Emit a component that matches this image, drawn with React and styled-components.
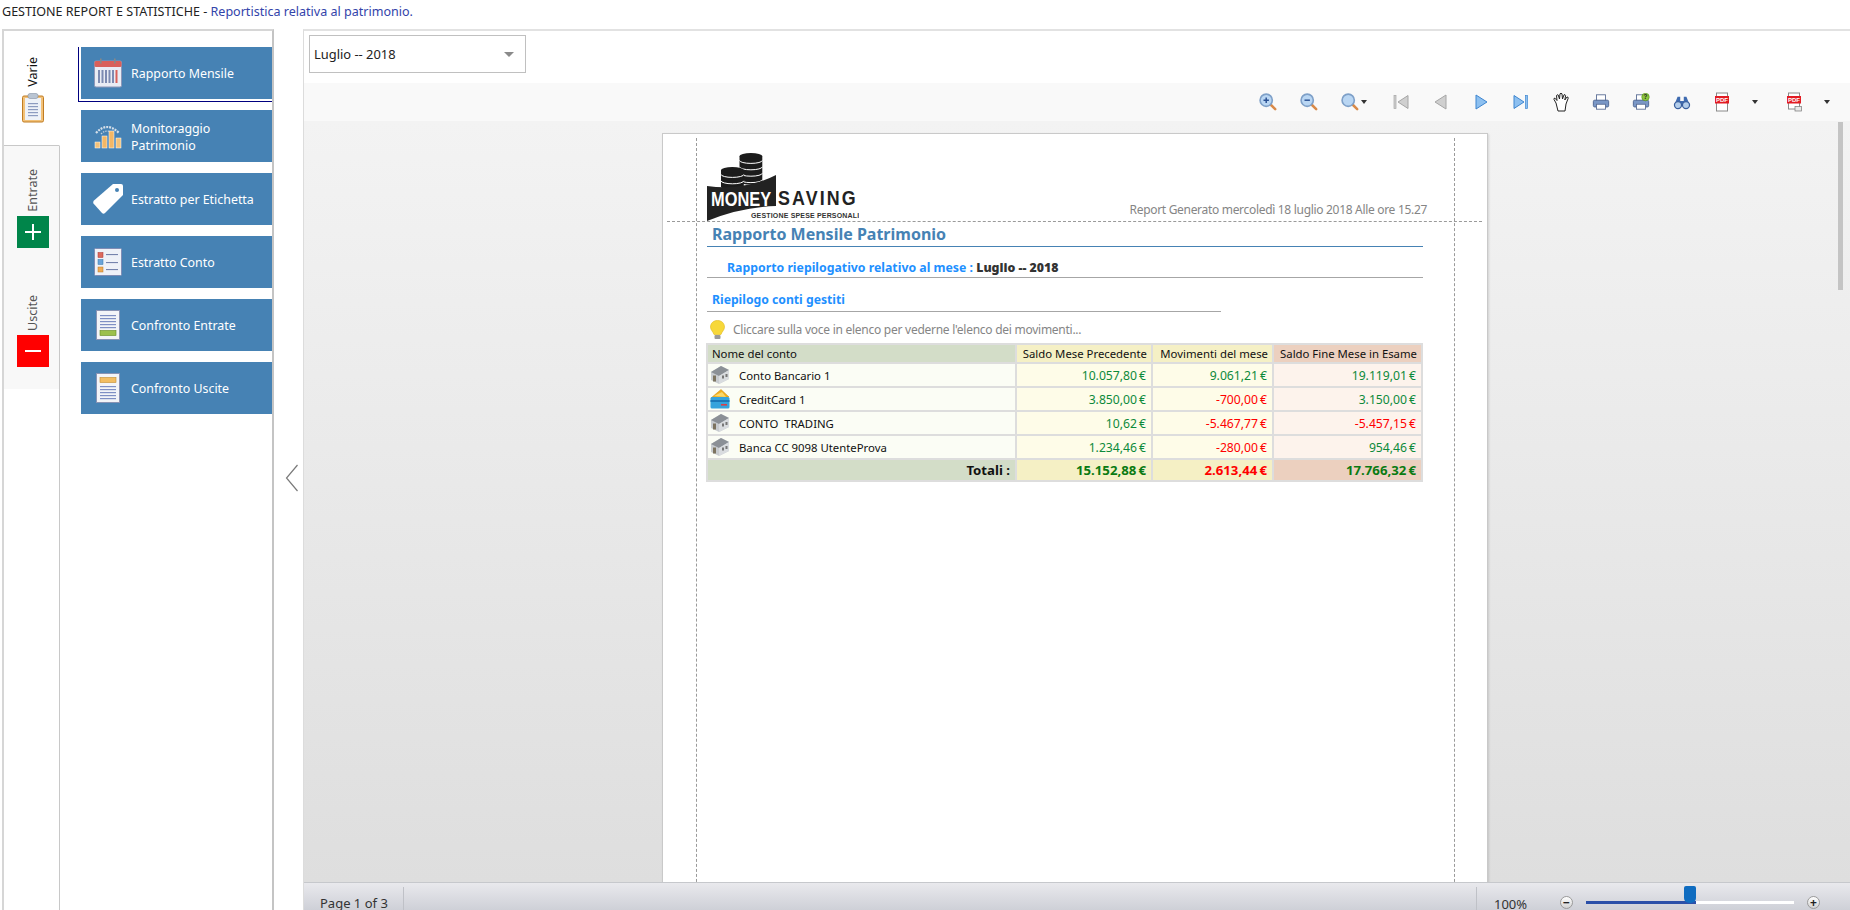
import React from 'react'
import styled, { createGlobalStyle } from 'styled-components'

const Global = createGlobalStyle`
    html, body {
        margin : 0;
        padding : 0;
        width : 1850px;
        height : 910px;
        overflow : hidden;
        background : #fff;
        font-family : "Noto Sans", "Liberation Sans", sans-serif;
        color : #222;
    }
    * { box-sizing : border-box; }
`

const Shell = styled.div`
    width : 1850px;
    height : 910px;
    display : flex;
    flex-direction : column;
    overflow : hidden;
`
const TopLine = styled.div`
    height : 29px;
    flex : none;
    padding : 3px 0 0 2px;
    font-size : 12.55px;
    line-height : 17px;
    color : #222;
    span { color : #3344aa; }
`
const Main = styled.div`
    flex : 1;
    min-height : 0;
    display : flex;
`
const LeftPanel = styled.div`
    width : 272px;
    margin-left : 2px;
    flex : none;
    display : flex;
    border : 2px solid #d6d6d6;
    border-bottom : 0;
    border-right-color : #c4c4c4;
`
const Tabs = styled.div`
    width : 56px;
    flex : none;
    display : flex;
    flex-direction : column;
`
const Tab = styled.div`
    height : ${p => p.$h}px;
    flex : none;
    display : flex;
    flex-direction : column;
    align-items : center;
    justify-content : flex-end;
    padding-bottom : ${p => p.$pb}px;
    padding-left : 3px;
    background : ${p => p.$active ? '#fff' : '#f8f8f8'};
    border-right : ${p => p.$active ? '1px solid transparent' : '1px solid #c8c8c8'};
    border-bottom : ${p => p.$active ? '1px solid #c8c8c8' : '0'};
    color : ${p => p.$active ? '#111' : '#555'};
`
const TabLabel = styled.div`
    writing-mode : vertical-rl;
    transform : rotate(180deg);
    font-size : 12.5px;
    line-height : 16px;
    margin-bottom : ${p => p.$mb}px;
`
const TabTail = styled.div`
    flex : 1;
    border-right : 1px solid #c8c8c8;
`
const ActionBox = styled.div`
    width : 32px;
    height : 32px;
    background : ${p => p.$bg};
    display : flex;
    align-items : center;
    justify-content : center;
`
const Menu = styled.div`
    flex : 1;
    padding : 16px 0 0 21px;
    display : flex;
    flex-direction : column;
    gap : 11px;
`
const MenuButton = styled.div`
    position : relative;
    height : 52px;
    flex : none;
    background : #4682b4;
    color : #fff;
    display : flex;
    align-items : center;
    font-size : 12.4px;
    line-height : 17px;
    ${p => p.$selected && `
        &::after {
            content : '';
            position : absolute;
            left : -3px;
            top : 0;
            right : 0;
            bottom : -3px;
            border-left : 1px solid #00007f;
            border-bottom : 1px solid #00007f;
        }
    `}
`
const MenuIcon = styled.div`
    width : 50px;
    flex : none;
    display : flex;
    justify-content : center;
    padding-left : 4px;
`
const MenuLabel = styled.div`
    padding-top : 1px;
`
const Splitter = styled.div`
    width : 29px;
    flex : none;
    display : flex;
    align-items : center;
    justify-content : center;
    padding : 16px 0 0 6px;
`
const Viewer = styled.div`
    flex : 1;
    min-width : 0;
    display : flex;
    flex-direction : column;
    border-left : 1px solid #dcdcdc;
    border-top : 2px solid #e2e2e2;
`
const ComboBar = styled.div`
    height : 52px;
    flex : none;
    padding : 4px 0 0 5px;
`
const Combo = styled.div`
    width : 217px;
    height : 38px;
    border : 1px solid #c0c0c0;
    display : flex;
    align-items : center;
    justify-content : space-between;
    padding : 0 11px 0 4px;
    font-size : 12.9px;
    color : #222;
`
const ComboCaret = styled.div`
    width : 0;
    height : 0;
    border-left : 5px solid transparent;
    border-right : 5px solid transparent;
    border-top : 5px solid #8a8a8a;
`
const Toolbar = styled.div`
    height : 38px;
    flex : none;
    background : #f9f9f9;
    display : flex;
    justify-content : flex-end;
    align-items : center;
`
const ToolButton = styled.div`
    width : ${p => p.$w}px;
    height : 24px;
    flex : none;
    display : flex;
    align-items : center;
    justify-content : ${p => p.$pad !== undefined ? 'flex-start' : 'center'};
    padding-left : ${p => p.$pad || 0}px;
`
const ToolCaret = styled.div`
    width : 0;
    height : 0;
    margin-left : ${p => p.$gap}px;
    border-left : 3.5px solid transparent;
    border-right : 3.5px solid transparent;
    border-top : 4px solid #333;
`
const ReportArea = styled.div`
    position : relative;
    flex : 1;
    min-height : 0;
    background : linear-gradient(#f3f3f3, #dedede);
    padding-top : 12px;
    display : flex;
    justify-content : center;
    overflow : hidden;
`
const ScrollThumb = styled.div`
    position : absolute;
    right : 7px;
    top : 1px;
    width : 5px;
    height : 168px;
    background : #c4c4c4;
`
const Page = styled.div`
    position : relative;
    width : 826px;
    height : 800px;
    flex : none;
    margin-right : 4px;
    background : #fff;
    border : 1px solid #c9c9c9;
    box-shadow : 1px 1px 2px rgba(0, 0, 0, .12);
    padding : 18px 64px 0 44px;
`
const GuideV = styled.div`
    position : absolute;
    top : 4px;
    bottom : 0;
    left : ${p => p.$x}px;
    border-left : 1px dashed #9a9a9a;
`
const GuideH = styled.div`
    position : absolute;
    top : 87px;
    left : 4px;
    width : 815px;
    border-top : 1px dashed #9a9a9a;
`
const PageHead = styled.div`
    height : 69px;
    display : flex;
    justify-content : space-between;
    align-items : flex-end;
    margin-right : -4px;
`
const Stamp = styled.div`
    font-size : 12px;
    line-height : 16px;
    color : #858585;
    letter-spacing : -.31px;
    padding-bottom : 3px;
`
const Title = styled.div`
    height : 26px;
    padding : 2px 0 0 5px;
    font-size : 16px;
    line-height : 22px;
    font-weight : 700;
    color : #4682b4;
    border-bottom : 1px solid #4682b4;
`
const Sub = styled.div`
    height : 31px;
    padding : 12px 0 0 20px;
    font-size : 12.3px;
    line-height : 18px;
    font-weight : 700;
    color : #1e90ff;
    border-bottom : 1px solid #a6a6a6;
    b { color : #333; }
`
const Section = styled.div`
    width : 514px;
    height : 34px;
    padding : 13px 0 0 5px;
    font-size : 12.2px;
    line-height : 18px;
    font-weight : 700;
    color : #1e90ff;
    border-bottom : 1px solid #a6a6a6;
`
const Hint = styled.div`
    height : 31px;
    padding : 4px 0 0 3px;
    display : flex;
    align-items : center;
    gap : 8px;
    font-size : 12px;
    color : #858585;
    letter-spacing : -.26px;
`
const Table = styled.table`
    width : 715px;
    margin-left : -1px;
    border-collapse : collapse;
    table-layout : fixed;
    font-size : 12.2px;
    color : #111;
    td, th {
        height : 24px;
        border : 2px solid #dddddd;
        padding : 0 5px 0 4px;
        font-weight : 400;
        white-space : nowrap;
    }
    thead th {
        height : 19px;
        padding-right : 4px;
        border-bottom : 1px solid #dddddd;
        font-size : 11.35px;
    }
`
const Head = styled.th`
    background : ${p => p.$bg};
    text-align : ${p => p.$left ? 'left' : 'right'};
`
const NameCell = styled.td`
    background : #fbfdf5;
    font-size : 11.35px;
`
const NameInner = styled.div`
    display : flex;
    align-items : center;
    gap : 9px;
    margin-left : -2px;
`
const NameText = styled.span`
    white-space : pre;
`
const Amount = styled.td`
    background : ${p => p.$bg};
    color : ${p => p.$neg ? '#ff0000' : '#0d8a3b'};
    text-align : right;
`
const TotalRow = styled.tr`
    td {
        height : 22px;
        font-size : 13.2px;
        font-weight : 700;
    }
`
const TotalLabel = styled.td`
    background : #d3ddc8;
    text-align : right;
`
const TotalAmount = styled.td`
    background : ${p => p.$bg};
    color : ${p => p.$neg ? '#ff0000' : '#0a7a12'};
    text-align : right;
`
const StatusBar = styled.div`
    height : 28px;
    flex : none;
    border-top : 1px solid #c6c8cc;
    background : linear-gradient(#e9e9ed, #ced0d7);
    display : flex;
    align-items : flex-start;
    font-size : 13px;
    color : #333;
`
const PageCount = styled.div`
    width : 99px;
    padding : 12px 0 0 16px;
    line-height : 17px;
    height : 40px;
`
const StatusSep = styled.div`
    width : 1px;
    height : 24px;
    margin-top : 4px;
    background : #bfc1c7;
`
const StatusFill = styled.div`
    flex : 1;
`
const ZoomPart = styled.div`
    width : 373px;
    display : flex;
    align-items : center;
    padding-top : 13px;
    height : 26px;
    padding-left : 17px;
`
const ZoomValue = styled.div`
    width : 66px;
    line-height : 17px;
    margin-top : 3px;
`
const RoundBtn = styled.div`
    width : 13px;
    height : 13px;
    border-radius : 50%;
    background : linear-gradient(#fff, #d2d2d2);
    border : 1px solid #9a9a9a;
    display : flex;
    align-items : center;
    justify-content : center;
    font-size : 12px;
    line-height : 1;
    font-weight : 700;
    color : #222;
`
const Track = styled.div`
    position : relative;
    width : 208px;
    height : 3px;
    margin : 0 13px;
    background : #fff;
`
const TrackFill = styled.div`
    height : 100%;
    background : #2b4fa8;
`
const Thumb = styled.div`
    position : absolute;
    left : 98px;
    top : -15px;
    width : 12px;
    height : 17px;
    background : #0f6cc0;
    border-radius : 2px 2px 5px 5px;
`

const Coins = ({ x, y, n }) => (
    <g>
        <path d={`M${x} ${y + 3} v${n * 6.4} a11.4 3 0 0 0 22.8 0 v-${n * 6.4} z`} fill='#1c1c1c' />
        <ellipse cx={x + 11.4} cy={y + 3} rx='11.4' ry='3' fill='#1c1c1c' />
        {Array.from({ length: n }).map((_, i) => (
            <path key={i} d={`M${x} ${y + 3 + (i + 1) * 6.4 - 2} a11.4 3 0 0 0 22.8 0`} fill='none' stroke='#fff' strokeWidth='1' />
        ))}
    </g>
)

const logoFont = { fontFamily : 'Liberation Sans', fontWeight : 700 }

const Logo = () => (
    <svg width='152' height='68' viewBox='0 0 152 68'>
        <Coins x={32.5} y={0} n={4} />
        <Coins x={14} y={14} n={3} />
        <path d='M0 33 Q38 38 69 22 L69 53 Q34 54 0 68 z' fill='#222' />
        <text transform='translate(4 53) scale(.82 1)' {...logoFont} fontSize='20' fill='#fff'>MONEY</text>
        <text transform='translate(71 52) scale(.85 1)' {...logoFont} fontSize='21' letterSpacing='2.5' fill='#222'>SAVING</text>
        <text x='44' y='65' {...logoFont} fontSize='7' letterSpacing='.17' fill='#333'>GESTIONE SPESE PERSONALI</text>
    </svg>
)

const Clipboard = () => (
    <svg width='24' height='30' viewBox='0 0 24 30'>
        <rect x='1.5' y='3' width='21' height='26' rx='1.5' fill='#f2c178' stroke='#c07c22' />
        <rect x='4' y='5' width='16' height='22' fill='#eef2f8' />
        <rect x='7' y='0.5' width='10' height='5' rx='2' fill='#b9c4d2' stroke='#8492a4' strokeWidth='.6' />
        {[10, 13, 16, 19, 22].map(y => <rect key={y} x='7' y={y} width='10' height='1.2' fill='#8d9cc0' />)}
    </svg>
)

const Calendar = () => (
    <svg width='28' height='30' viewBox='0 0 28 30'>
        <rect x='.5' y='3' width='27' height='26' rx='1.5' fill='#e9ecf4' stroke='#8d97b8' />
        <rect x='.5' y='3' width='27' height='6' rx='1.5' fill='#d9605a' />
        <rect x='6' y='.5' width='1.6' height='5' fill='#888' />
        <rect x='20' y='.5' width='1.6' height='5' fill='#888' />
        {[4, 7.5, 11, 14.5, 18].map(x => <rect key={x} x={x} y='12' width='2' height='13' fill='#7d8bb2' />)}
        <rect x='21.5' y='12' width='2' height='13' fill='#d9605a' />
    </svg>
)

const ChartIcon = () => (
    <svg width='28' height='28' viewBox='0 0 28 28'>
        <path d='M2 11 Q13 -1 25 11' fill='none' stroke='#d5dfe9' strokeWidth='2.2' strokeDasharray='2 1' />
        <path d='M7 12 Q13 6 20 12' fill='none' stroke='#c3d0dd' strokeWidth='1.2' strokeDasharray='1.5 1' />
        <rect x='1' y='20' width='5' height='6' fill='#f3c27a' stroke='#fff' strokeWidth='.5' />
        <rect x='8' y='14' width='5' height='12' fill='#f3b765' stroke='#fff' strokeWidth='.5' />
        <rect x='15' y='9' width='5' height='17' fill='#f3b765' stroke='#fff' strokeWidth='.5' />
        <rect x='22' y='16' width='5' height='10' fill='#f3c27a' stroke='#fff' strokeWidth='.5' />
    </svg>
)

const TagIcon = () => (
    <svg width='32' height='32' viewBox='0 0 32 32'>
        <path d='M21 1 L29 1 Q31 1 31 3 L31 12 L13 30 Q11.5 31.5 10 30 L1.5 20.5 Q0.5 19 2 17.5 z' fill='#fff' />
        <circle cx='25' cy='7' r='2' fill='#4682b4' />
    </svg>
)

const ListIcon = () => (
    <svg width='28' height='28' viewBox='0 0 28 28'>
        <rect x='.5' y='.5' width='27' height='27' rx='1' fill='#eef1f8' stroke='#7f8db5' />
        <rect x='4' y='4.5' width='5' height='5' fill='#dc6a5c' stroke='#a33' strokeWidth='.5' />
        <rect x='4' y='11.5' width='5' height='5' fill='#6aa3d8' stroke='#37a' strokeWidth='.5' />
        <rect x='4' y='19' width='5' height='5' fill='#eeaa55' stroke='#b72' strokeWidth='.5' />
        {[6, 14, 21].map(y => <rect key={y} x='12' y={y} width='12' height='1.1' fill='#7583ad' />)}
    </svg>
)

const DocIcon = ({ kind }) => (
    <svg width='24' height='30' viewBox='0 0 24 30'>
        <rect x='.5' y='.5' width='23' height='29' fill='#f3f4f8' stroke='#8893b4' />
        {(kind === 'green' ? [5, 8, 11, 14, 17] : [13, 16, 19, 22, 25]).map(y => <rect key={y} x='4' y={y} width='16' height='1.2' fill='#7f8fc4' />)}
        {kind === 'green'
            ? <rect x='4' y='20.5' width='16' height='5' fill='#9cc04c' stroke='#648a1e' strokeWidth='.6' />
            : <rect x='4' y='4.5' width='16' height='5' fill='#f2bd62' stroke='#c18a30' strokeWidth='.6' />}
    </svg>
)

const Magnifier = ({ sign }) => (
    <svg width='18' height='18' viewBox='0 0 20 20'>
        <path d='M12.5 12.5 L18 18' stroke='#d98a48' strokeWidth='2.8' strokeLinecap='round' />
        <circle cx='8' cy='8' r='6.8' fill='#b9d6f3' stroke='#7ea0c8' strokeWidth='1.8' />
        {sign && <path d={sign === '+' ? 'M5 8 h6 M8 5 v6' : 'M5 8 h6'} stroke='#284f92' strokeWidth='1.6' />}
    </svg>
)

const NavIcon = ({ dir, edge, active }) => {
    const fill = active ? '#8dc0f0' : '#cfcfcf'
    const stroke = active ? '#3f86d0' : '#a6a6a6'
    return (
        <svg width='18' height='18' viewBox='0 0 18 18'>
            {dir === 'left'
                ? <path d={edge ? 'M16 2.5 V15.5 L6 9 z' : 'M14 2 V16 L3 9 z'} fill={fill} stroke={stroke} />
                : <path d={edge ? 'M2 2.5 V15.5 L12 9 z' : 'M4 2 V16 L15 9 z'} fill={fill} stroke={stroke} />}
            {edge && <rect x={dir === 'left' ? 2 : 13.5} y='2.5' width='2' height='13' fill={fill} stroke={stroke} strokeWidth='.7' />}
        </svg>
    )
}

const HandIcon = () => (
    <svg width='18' height='20' viewBox='0 0 18 20'>
        <path d='M4 11 L2 7.5 Q1.5 6 3 6.2 L5 8.5 L4.5 3.5 Q5 2.3 6.2 3 L7.5 7 L8 1.8 Q9 .8 10 1.8 L10.5 7 L12 2.8 Q13.2 2.2 13.6 3.6 L12.8 8 L15 5 Q16.4 4.8 16.2 6.2 L14 12 L13 19 H6 z' fill='#fff' stroke='#222' strokeWidth='1' strokeLinejoin='round' />
    </svg>
)

const PrintIcon = ({ help }) => (
    <svg width='18' height='18' viewBox='0 0 20 20'>
        <rect x='5' y='2' width='10' height='7' fill='#fff' stroke='#5c6f96' />
        <rect x='1.5' y='8' width='17' height='7.5' rx='1.5' fill='#7a97c6' stroke='#4a628f' />
        <rect x='5' y='12.5' width='10' height='5.5' fill='#fff' stroke='#5c6f96' />
        {help && <circle cx='15' cy='4.5' r='4.2' fill='#8cc63f' stroke='#4d8a10' strokeWidth='.6' />}
        {help && <text x='15' y='7' fontSize='7' fontWeight='700' textAnchor='middle' fontFamily='Liberation Sans' fill='#222'>?</text>}
    </svg>
)

const BinocularsIcon = () => (
    <svg width='18' height='16' viewBox='0 0 20 18'>
        <path d='M5 3 H8 V8 H12 V3 H15 L18.5 12 H1.5 z' fill='#3f6bb0' />
        <circle cx='5.5' cy='12.5' r='4' fill='#b3cdea' stroke='#3a5f9e' strokeWidth='1.4' />
        <circle cx='14.5' cy='12.5' r='4' fill='#b3cdea' stroke='#3a5f9e' strokeWidth='1.4' />
    </svg>
)

const PdfIcon = ({ mail }) => (
    <svg width='16' height='20' viewBox='0 0 16 20'>
        <rect x='2.5' y='1' width='11' height={mail ? 16 : 18} fill='#fff' stroke='#8a8a8a' />
        <rect x='1' y='4' width='14' height='7.5' fill='#e21b23' />
        <text x='8' y='10.3' fontSize='6' fontWeight='700' textAnchor='middle' fontFamily='Liberation Sans' fill='#fff'>PDF</text>
        {mail && <rect x='9' y='14.5' width='6.5' height='4.5' fill='#e8e8e8' stroke='#777' strokeWidth='.7' />}
    </svg>
)

const BankIcon = () => (
    <svg width='20' height='20' viewBox='0 0 20 20'>
        <path d='M1 7 L11 1 L19 5 L19 14 L9 19 L1 15 z' fill='#c8ccd0' />
        <path d='M1 7 L9 11 L19 5 L11 1 z' fill='#8b9096' />
        <path d='M9 11 V19 L19 14 V5 z' fill='#d9dcdf' />
        <rect x='3' y='10.5' width='3' height='6' fill='#7d7460' />
        <rect x='12' y='10.5' width='2' height='3' fill='#777' />
        <rect x='15.5' y='9' width='2' height='3' fill='#777' />
    </svg>
)

const CardIcon = () => (
    <svg width='20' height='20' viewBox='0 0 20 20'>
        <path d='M1 9 L11 .5 L19 8 z' fill='#f2b01e' stroke='#c9860c' strokeWidth='.5' />
        <path d='M4 7 L12 3 L16 8 z' fill='#fbd86a' />
        <rect x='.5' y='8' width='19' height='11.5' rx='1.5' fill='#35a3dc' />
        <rect x='.5' y='11' width='19' height='2' fill='#1b78b8' />
        <rect x='11' y='15' width='6' height='1.6' fill='#d8414a' />
    </svg>
)

const BulbIcon = () => (
    <svg width='15' height='20' viewBox='0 0 15 20'>
        <path d='M7.5 .5 C11.5 .5 14.5 3.2 14.5 7 C14.5 10 12 11.5 11 14.5 H4 C3 11.5 .5 10 .5 7 C.5 3.2 3.5 .5 7.5 .5 z' fill='#f7d83a' stroke='#e0b81c' strokeWidth='.6' />
        <rect x='4.5' y='15' width='6' height='4' rx='1' fill='#9a9a9a' />
    </svg>
)

const menuItems = [
    { label : 'Rapporto Mensile', icon : <Calendar />, selected : true },
    { label : <>Monitoraggio<br />Patrimonio</>, icon : <ChartIcon /> },
    { label : 'Estratto per Etichetta', icon : <TagIcon /> },
    { label : 'Estratto Conto', icon : <ListIcon /> },
    { label : 'Confronto Entrate', icon : <DocIcon kind='green' /> },
    { label : 'Confronto Uscite', icon : <DocIcon kind='orange' /> },
]

const rows = [
    { name : 'Conto Bancario 1', icon : <BankIcon />, prev : '10.057,80', mov : '9.061,21', end : '19.119,01' },
    { name : 'CreditCard 1', icon : <CardIcon />, prev : '3.850,00', mov : '-700,00', end : '3.150,00' },
    { name : 'CONTO  TRADING', icon : <BankIcon />, prev : '10,62', mov : '-5.467,77', end : '-5.457,15' },
    { name : 'Banca CC 9098 UtenteProva', icon : <BankIcon />, prev : '1.234,46', mov : '-280,00', end : '954,46' },
]

const euro = v => `${v}\u2009€`
const isNeg = v => v.startsWith('-')

export default function App () {
    return (
        <Shell>
            <Global />
            <TopLine>GESTIONE REPORT E STATISTICHE - <span>Reportistica relativa al patrimonio.</span></TopLine>
            <Main>
                <LeftPanel>
                    <Tabs>
                        <Tab $active $h={115} $pb={22}>
                            <TabLabel $mb={6}>Varie</TabLabel>
                            <Clipboard />
                        </Tab>
                        <Tab $h={122} $pb={20}>
                            <TabLabel $mb={4}>Entrate</TabLabel>
                            <ActionBox $bg='#00854a'>
                                <svg width='18' height='18' viewBox='0 0 18 18'><path d='M9 1 V17 M1 9 H17' stroke='#fff' strokeWidth='2' /></svg>
                            </ActionBox>
                        </Tab>
                        <Tab $h={121} $pb={22}>
                            <TabLabel $mb={4}>Uscite</TabLabel>
                            <ActionBox $bg='#ff0000'>
                                <svg width='18' height='18' viewBox='0 0 18 18'><path d='M1 9 H17' stroke='#fff' strokeWidth='2' /></svg>
                            </ActionBox>
                        </Tab>
                        <TabTail />
                    </Tabs>
                    <Menu>
                        {menuItems.map((item, i) => (
                            <MenuButton key={i} $selected={item.selected}>
                                <MenuIcon>{item.icon}</MenuIcon>
                                <MenuLabel>{item.label}</MenuLabel>
                            </MenuButton>
                        ))}
                    </Menu>
                </LeftPanel>
                <Splitter>
                    <svg width='14' height='28' viewBox='0 0 14 28'><path d='M12.5 1 L1.5 14 L12.5 27' fill='none' stroke='#7a7a7a' strokeWidth='1.2' /></svg>
                </Splitter>
                <Viewer>
                    <ComboBar>
                        <Combo>Luglio -- 2018<ComboCaret /></Combo>
                    </ComboBar>
                    <Toolbar>
                        <ToolButton $w={40}><Magnifier sign='+' /></ToolButton>
                        <ToolButton $w={41}><Magnifier sign='-' /></ToolButton>
                        <ToolButton $w={52} $pad={12}><Magnifier /><ToolCaret $gap={2} /></ToolButton>
                        <ToolButton $w={40}><NavIcon dir='left' edge /></ToolButton>
                        <ToolButton $w={39}><NavIcon dir='left' /></ToolButton>
                        <ToolButton $w={41}><NavIcon dir='right' active /></ToolButton>
                        <ToolButton $w={40}><NavIcon dir='right' edge active /></ToolButton>
                        <ToolButton $w={40}><HandIcon /></ToolButton>
                        <ToolButton $w={40}><PrintIcon /></ToolButton>
                        <ToolButton $w={40}><PrintIcon help /></ToolButton>
                        <ToolButton $w={42}><BinocularsIcon /></ToolButton>
                        <ToolButton $w={68} $pad={11}><PdfIcon /><ToolCaret $gap={22} /></ToolButton>
                        <ToolButton $w={79} $pad={15}><PdfIcon mail /><ToolCaret $gap={22} /></ToolButton>
                    </Toolbar>
                    <ReportArea>
                        <ScrollThumb />
                        <Page>
                            <GuideV $x={33} />
                            <GuideV $x={791} />
                            <GuideH />
                            <PageHead>
                                <Logo />
                                <Stamp>Report Generato mercoledì 18 luglio 2018 Alle ore 15.27</Stamp>
                            </PageHead>
                            <Title>Rapporto Mensile Patrimonio</Title>
                            <Sub>Rapporto riepilogativo relativo al mese : <b>Luglio -- 2018</b></Sub>
                            <Section>Riepilogo conti gestiti</Section>
                            <Hint><BulbIcon />Cliccare sulla voce in elenco per vederne l'elenco dei movimenti...</Hint>
                            <Table>
                                <colgroup>
                                    <col style={{ width : 309 }} />
                                    <col style={{ width : 136 }} />
                                    <col style={{ width : 121 }} />
                                    <col style={{ width : 149 }} />
                                </colgroup>
                                <thead>
                                    <tr>
                                        <Head $left $bg='#d3ddc8'>Nome del conto</Head>
                                        <Head $bg='#f5f0c5'>Saldo Mese Precedente</Head>
                                        <Head $bg='#f5f0c5'>Movimenti del mese</Head>
                                        <Head $bg='#ecd0bf'>Saldo Fine Mese in Esame</Head>
                                    </tr>
                                </thead>
                                <tbody>
                                    {rows.map(r => (
                                        <tr key={r.name}>
                                            <NameCell><NameInner>{r.icon}<NameText>{r.name}</NameText></NameInner></NameCell>
                                            <Amount $bg='#fefce8' $neg={isNeg(r.prev)}>{euro(r.prev)}</Amount>
                                            <Amount $bg='#fefce8' $neg={isNeg(r.mov)}>{euro(r.mov)}</Amount>
                                            <Amount $bg='#fdf3ec' $neg={isNeg(r.end)}>{euro(r.end)}</Amount>
                                        </tr>
                                    ))}
                                    <TotalRow>
                                        <TotalLabel>Totali :</TotalLabel>
                                        <TotalAmount $bg='#f5f0c5'>{euro('15.152,88')}</TotalAmount>
                                        <TotalAmount $bg='#f5f0c5' $neg>{euro('2.613,44')}</TotalAmount>
                                        <TotalAmount $bg='#ecd0bf'>{euro('17.766,32')}</TotalAmount>
                                    </TotalRow>
                                </tbody>
                            </Table>
                        </Page>
                    </ReportArea>
                    <StatusBar>
                        <PageCount>Page 1 of 3</PageCount>
                        <StatusSep />
                        <StatusFill />
                        <StatusSep />
                        <ZoomPart>
                            <ZoomValue>100%</ZoomValue>
                            <RoundBtn>−</RoundBtn>
                            <Track>
                                <TrackFill style={{ width : '53%' }} />
                                <Thumb />
                            </Track>
                            <RoundBtn>+</RoundBtn>
                        </ZoomPart>
                    </StatusBar>
                </Viewer>
            </Main>
        </Shell>
    )
}
